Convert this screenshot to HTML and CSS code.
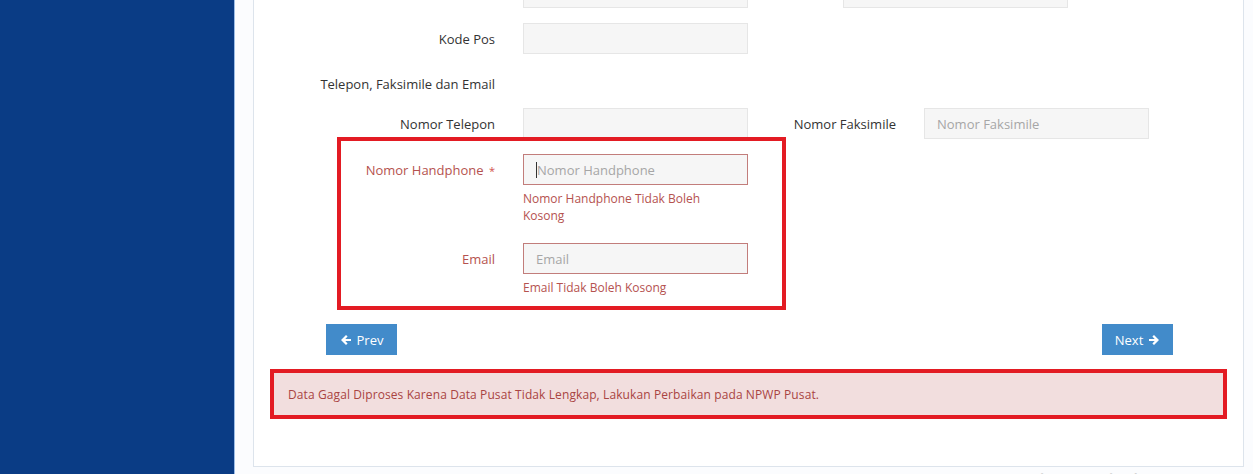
FILE: index.html
```html
<!DOCTYPE html>
<html lang="id">
<head>
    <meta charset="UTF-8">
    <meta name="viewport" content="width=device-width, initial-scale=1.0">
    <title>Data Wajib Pajak - Alamat dan Kontak</title>
    <link rel="stylesheet" href="styles.css">
</head>
<body>
    <div class="layout">
        <aside class="sidebar"></aside>

        <main class="content">
            <div class="panel">
                <div class="panel-body">

                    <div class="form-row">
                        <label class="label">Kelurahan/Desa</label>
                        <input class="input" type="text">
                        <label class="label label-2 label-short">Kota</label>
                        <input class="input input-2b" type="text">
                    </div>

                    <div class="form-row">
                        <label class="label">Kode Pos</label>
                        <input class="input" type="text">
                    </div>

                    <div class="form-row form-heading">
                        <label class="label">Telepon, Faksimile dan Email</label>
                    </div>

                    <div class="form-row">
                        <label class="label">Nomor Telepon</label>
                        <input class="input" type="text">
                        <label class="label label-2">Nomor Faksimile</label>
                        <input class="input" type="text" placeholder="Nomor Faksimile">
                    </div>

                    <div class="mark">
                        <div class="form-row has-error row-phone">
                            <label class="label">Nomor Handphone <span class="req">*</span></label>
                            <div class="field">
                                <div class="input input-focus"><span class="caret"></span><span class="ph">Nomor Handphone</span></div>
                                <span class="help">Nomor Handphone Tidak Boleh Kosong</span>
                            </div>
                        </div>

                        <div class="form-row has-error row-email">
                            <label class="label">Email</label>
                            <div class="field">
                                <input class="input" type="text" placeholder="Email">
                                <span class="help">Email Tidak Boleh Kosong</span>
                            </div>
                        </div>

                        <div class="mark-box"></div>
                    </div>

                    <div class="nav-buttons">
                        <button class="btn">
                            <svg width="12" height="12" viewBox="0 0 12 12"><path d="M6 1 L1 6 L6 11 L7.6 9.4 L5.3 7.1 H11 V4.9 H5.3 L7.6 2.6 Z" fill="#fff"/></svg>
                            Prev
                        </button>
                        <button class="btn">
                            Next
                            <svg width="12" height="12" viewBox="0 0 12 12"><path d="M6 1 L11 6 L6 11 L4.4 9.4 L6.7 7.1 H1 V4.9 H6.7 L4.4 2.6 Z" fill="#fff"/></svg>
                        </button>
                    </div>

                    <div class="alert">
                        Data Gagal Diproses Karena Data Pusat Tidak Lengkap, Lakukan Perbaikan pada NPWP Pusat.
                    </div>

                </div>
            </div>
        </main>
    </div>

    <div class="watermark">Activate Windows</div>
</body>
</html>
```

FILE: styles.css
```css
html, body {
    margin: 0;
    height: 474px;
    overflow: hidden;
}
body {
    font-family: 'Open Sans', 'Noto Sans', sans-serif;
    font-size: 13px;
    color: #333;
    background: #fff;
    position: relative;
}
.layout {
    display: flex;
    height: 100%;
}
.sidebar {
    width: 234px;
    flex-shrink: 0;
    background: #0a3c85;
    border-right: 1px solid #9dbde6;
}
.content {
    flex: 1;
    background: #fbfcfe;
    padding: 0 9px 0 18px;
}
.panel {
    display: flow-root;
    background: #fff;
    border: 1px solid #dde4ec;
    border-top: none;
    height: 467px;
    box-sizing: border-box;
}
.panel-body {
    margin-top: -23px;
    padding: 0 16px;
}
.form-row {
    display: flex;
    align-items: flex-start;
    margin-bottom: 15px;
}
.label {
    width: 225px;
    margin-right: 28px;
    text-align: right;
    padding-top: 7px;
    line-height: 18px;
    flex-shrink: 0;
}
.label-2 {
    width: 128px;
    margin-left: 20px;
}
.label-short {
    width: 47px;
}
.input {
    width: 225px;
    height: 31px;
    box-sizing: border-box;
    border: 1px solid #e6e6e6;
    background: #f6f6f6;
    padding: 0 12px;
    font-family: inherit;
    font-size: 13px;
    color: #555;
    outline: none;
    display: flex;
    align-items: center;
}
.input::placeholder,
.ph {
    color: #a6a6a6;
}
.form-heading {
    height: 24px;
}
.form-heading .label {
    padding-top: 6px;
}
.field {
    display: flex;
    flex-direction: column;
}
.has-error .label {
    color: #b5524f;
}
.has-error .input {
    border-color: #c27d7b;
}
.req {
    color: #d2514e;
    font-size: 11px;
    margin-left: 2px;
}
.caret {
    width: 1px;
    height: 16px;
    background: #333;
    margin-right: 0;
}
.help {
    width: 200px;
    margin-top: 5px;
    font-size: 12px;
    line-height: 17px;
    color: #b5524f;
}
.row-phone {
    margin-bottom: 19px;
}
.row-email {
    margin-bottom: 28px;
}
.mark {
    position: relative;
}
.mark-box {
    position: absolute;
    left: 67px;
    top: -17px;
    width: 449px;
    height: 173px;
    box-sizing: border-box;
    border: 4px solid #e31b23;
}
.nav-buttons {
    display: flex;
    justify-content: space-between;
    padding: 0 54px 0 56px;
    margin-bottom: 14px;
}
.btn {
    height: 31px;
    width: 71px;
    border: none;
    background: #428bca;
    color: #fff;
    font-family: inherit;
    font-size: 13px;
    display: flex;
    align-items: center;
    justify-content: center;
    gap: 5px;
    padding: 0;
}
.alert {
    border: 4px solid #e31b23;
    background: #f2dede;
    color: #a94442;
    font-size: 12px;
    letter-spacing: 0.1px;
    height: 50px;
    box-sizing: border-box;
    padding: 0 14px;
    display: flex;
    align-items: center;
}
.watermark {
    position: absolute;
    left: 1010px;
    top: 467px;
    font-family: 'Noto Sans', sans-serif;
    font-size: 20px;
    color: #d4d4d4;
}
```
